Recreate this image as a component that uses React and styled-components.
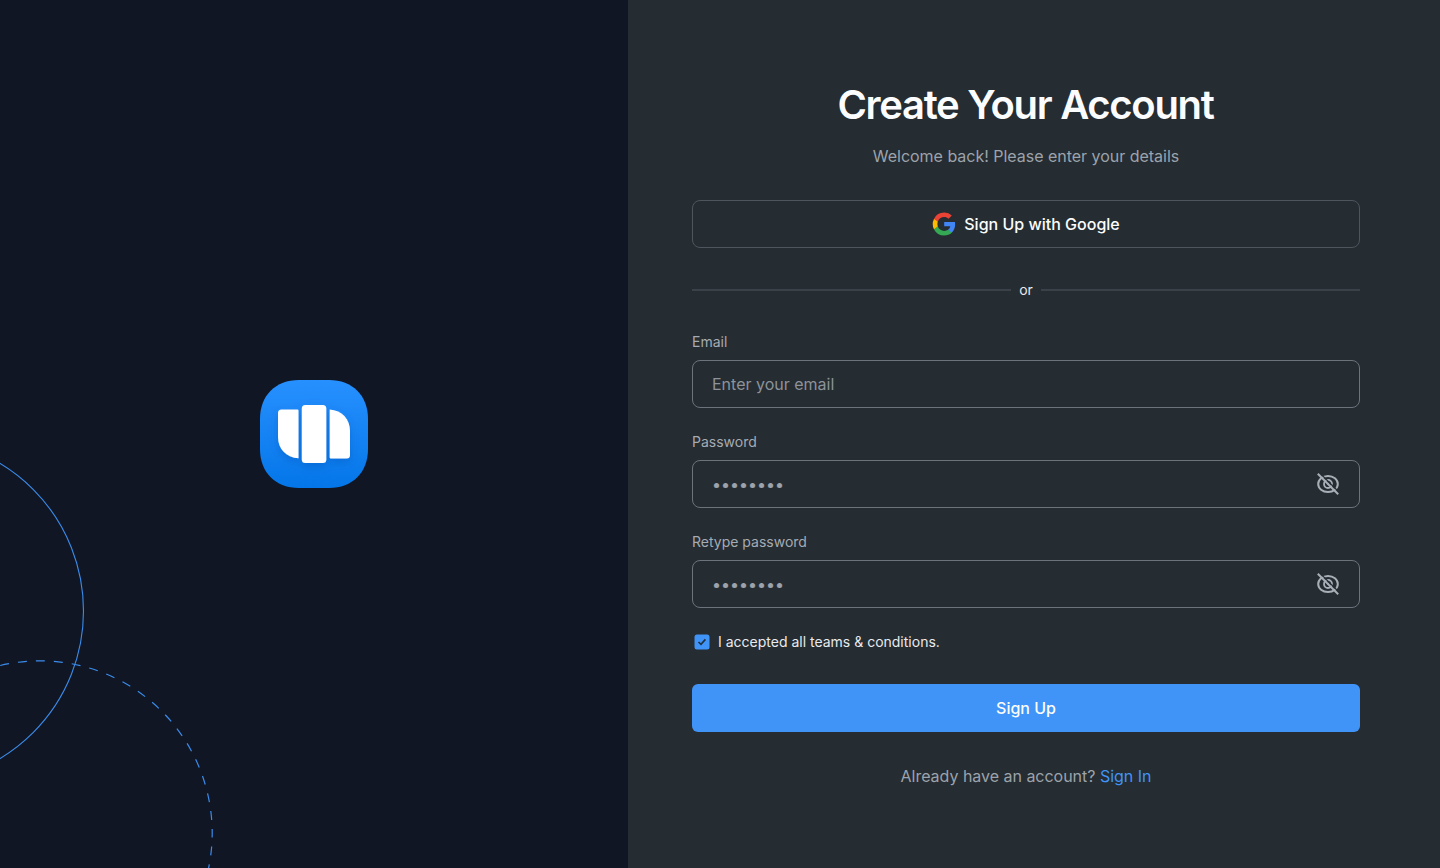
import React from "react";
import styled, { createGlobalStyle } from "styled-components";

const GlobalStyle = createGlobalStyle`
  * { box-sizing: border-box; }
  body { margin: 0; background: #252c32; font-family: Inter, "Liberation Sans", sans-serif; }
`;

const Page = styled.div`
  display: flex;
  width: 100%;
  height: 868px;
  overflow: hidden;
`;

const Brand = styled.aside`
  position: relative;
  flex: 0 0 628px;
  display: flex;
  align-items: center;
  justify-content: center;
  background: #101624;
`;

const Rings = styled.svg`
  position: absolute;
  left: 0;
  bottom: 0;
`;

const Logo = styled.svg`
  display: block;
`;

const Panel = styled.main`
  flex: 1;
  padding: 80px 80px 0 64px;
  background: #252c32;
`;

const Form = styled.form`
  display: flex;
  flex-direction: column;
  margin: 0;
`;

const Title = styled.h1`
  margin: 0;
  padding-right: 1px;
  font-size: 40px;
  line-height: 50px;
  font-weight: 600;
  letter-spacing: -1.3px;
  text-align: center;
  color: #fbfcfd;
`;

const Text = styled.p`
  margin: ${(p) => p.$top}px 0 0;
  font-size: 16px;
  line-height: 24px;
  letter-spacing: -0.02px;
  text-align: center;
  color: #9ca3ab;
`;

const Link = styled.a`
  color: #4094f7;
`;

const Button = styled.button`
  display: flex;
  align-items: center;
  justify-content: center;
  gap: 8px;
  height: 48px;
  margin-top: ${(p) => p.$top}px;
  padding: 0;
  border: ${(p) => (p.$primary ? "0" : "1px solid #4e555d")};
  border-radius: ${(p) => (p.$primary ? 6 : 8)}px;
  background: ${(p) => (p.$primary ? "#4094f7" : "transparent")};
  color: #fbfcfd;
  font: 500 16px/24px Inter, "Liberation Sans", sans-serif;
`;

const Divider = styled.div`
  display: flex;
  align-items: center;
  gap: 8px;
  height: 24px;
  margin: 30px 0 28px;
  font-size: 14px;
  line-height: 24px;
  color: #e8eaed;

  &::before,
  &::after {
    content: "";
    flex: 1;
    height: 2px;
    background: #3a4148;
  }
`;

const DividerText = styled.span`
  padding-bottom: 1px;
`;

const Field = styled.label`
  display: flex;
  flex-direction: column;
  gap: 6px;
  margin-bottom: 22px;
`;

const Label = styled.span`
  font-size: 14px;
  line-height: 24px;
  color: #a5abb2;
`;

const InputBox = styled.span`
  display: flex;
  align-items: center;
  justify-content: space-between;
  height: 48px;
  padding: 0 19px;
  border: 1px solid #6c737b;
  border-radius: 8px;
  font-size: 16px;
  line-height: 24px;
  color: #8c939a;
`;

const Dots = styled.span`
  font-size: 16px;
  padding-bottom: 1px;
  color: #9ca3ab;
  -webkit-text-stroke: 0.2px #9ca3ab;
`;

const Terms = styled.label`
  display: flex;
  align-items: center;
  gap: 6px;
  height: 24px;
  font-size: 14px;
  line-height: 24px;
  color: #e8eaed;
`;

const EyeOff = () => (
  <svg width="24" height="24" viewBox="0 0 24 24" fill="none" stroke="#a9afb6" strokeWidth="2">
    <ellipse cx="12" cy="12" rx="9.800" ry="8" />
    <circle cx="12" cy="12" r="4" strokeWidth="1.800" />
    <path d="M12 11.300v.9h.9" strokeWidth="1.500" />
    <path d="M3.400 .6l20.400 20.400" stroke="#252c32" strokeWidth="1.300" />
    <path d="M1.800 1.800l20.400 20.400" />
  </svg>
);

const Google = () => (
  <svg width="24" height="24" viewBox="-0.8 -0.6 25.200 25.200">
    <path fill="#4285f4" d="M23.500 12.270c0-.85-.08-1.670-.22-2.450H12v4.640h6.450a5.500 5.500 0 0 1-2.390 3.620v3h3.870c2.260-2.090 3.570-5.170 3.570-8.810z" />
    <path fill="#34a853" d="M12 24c3.240 0 5.950-1.080 7.930-2.910l-3.870-3c-1.070.72-2.450 1.150-4.060 1.150-3.120 0-5.770-2.110-6.720-4.950h-4v3.100A12 12 0 0 0 12 24z" />
    <path fill="#fbbc04" d="M5.280 14.290a7.200 7.200 0 0 1 0-4.580V6.620h-4a12 12 0 0 0 0 10.770z" />
    <path fill="#ea4335" d="M12 4.760c1.760 0 3.340.6 4.590 1.790l3.440-3.440A11.500 11.500 0 0 0 12 0 12 12 0 0 0 1.280 6.620l4 3.090C6.230 6.870 8.880 4.760 12 4.760z" />
  </svg>
);

const PasswordField = ({ label }) => (
  <Field>
    <Label>{label}</Label>
    <InputBox>
      <Dots>••••••••</Dots>
      <EyeOff />
    </InputBox>
  </Field>
);

export default function App() {
  return (
    <Page>
      <GlobalStyle />
      <Brand>
        <Rings width="230" height="428" viewBox="0 440 230 428" fill="none" stroke="#3b8ceb">
          <circle cx="-88.500" cy="611" r="172" strokeWidth="1.100" />
          <circle cx="40" cy="833" r="172.200" strokeWidth="1.200" strokeDasharray="9 9.033" strokeDashoffset="4.500" />
        </Rings>
        <Logo width="108" height="108" viewBox="0 0 108 108">
          <defs>
            <linearGradient id="tile" x1="0" y1="0" x2="0" y2="1">
              <stop offset="0" stopColor="#2790ff" />
              <stop offset="1" stopColor="#0476e8" />
            </linearGradient>
            <filter id="shade" x="-20%" y="-20%" width="140%" height="150%">
              <feDropShadow dx="0" dy="4" stdDeviation="4" floodColor="#0050b0" floodOpacity="0.35" />
            </filter>
          </defs>
          <path fill="url(#tile)" d="M0 39C0 15.500 15.500 0 39 0H69C92.500 0 108 15.500 108 39V69C108 92.500 92.500 108 69 108H39C15.500 108 0 92.500 0 69Z" />
          <g fill="#fff" filter="url(#shade)">
            <path d="M21.500 29.500H37.500Q38.500 29.500 38.500 30.500V78.300C26 77.500 18 69 18 57V33Q18 29.500 21.500 29.500Z" />
            <rect x="41.800" y="25" width="24.500" height="58" rx="3.500" />
            <path d="M69.700 29.500C82 30.300 90 39 90 51V75Q90 78.500 86.500 78.500H70.700Q69.700 78.500 69.700 77.500Z" />
          </g>
        </Logo>
      </Brand>
      <Panel>
        <Form>
          <Title>Create Your Account</Title>
          <Text $top={14}>Welcome back! Please enter your details</Text>
          <Button type="button" $top={32}>
            <Google />
            Sign Up with Google
          </Button>
          <Divider>
            <DividerText>or</DividerText>
          </Divider>
          <Field>
            <Label>Email</Label>
            <InputBox>Enter your email</InputBox>
          </Field>
          <PasswordField label="Password" />
          <PasswordField label="Retype password" />
          <Terms>
            <svg width="20" height="20" viewBox="0 0 20 20" fill="none">
              <rect x="2.500" y="2.500" width="15" height="15" rx="2.500" fill="#4094f7" />
              <path d="M6.500 10l2.500 2.400 4.400-5" stroke="#20303f" strokeWidth="1.600" />
            </svg>
            I accepted all teams &amp; conditions.
          </Terms>
          <Button type="button" $primary $top={30}>
            Sign Up
          </Button>
          <Text $top={32}>
            Already have an account? <Link>Sign In</Link>
          </Text>
        </Form>
      </Panel>
    </Page>
  );
}
